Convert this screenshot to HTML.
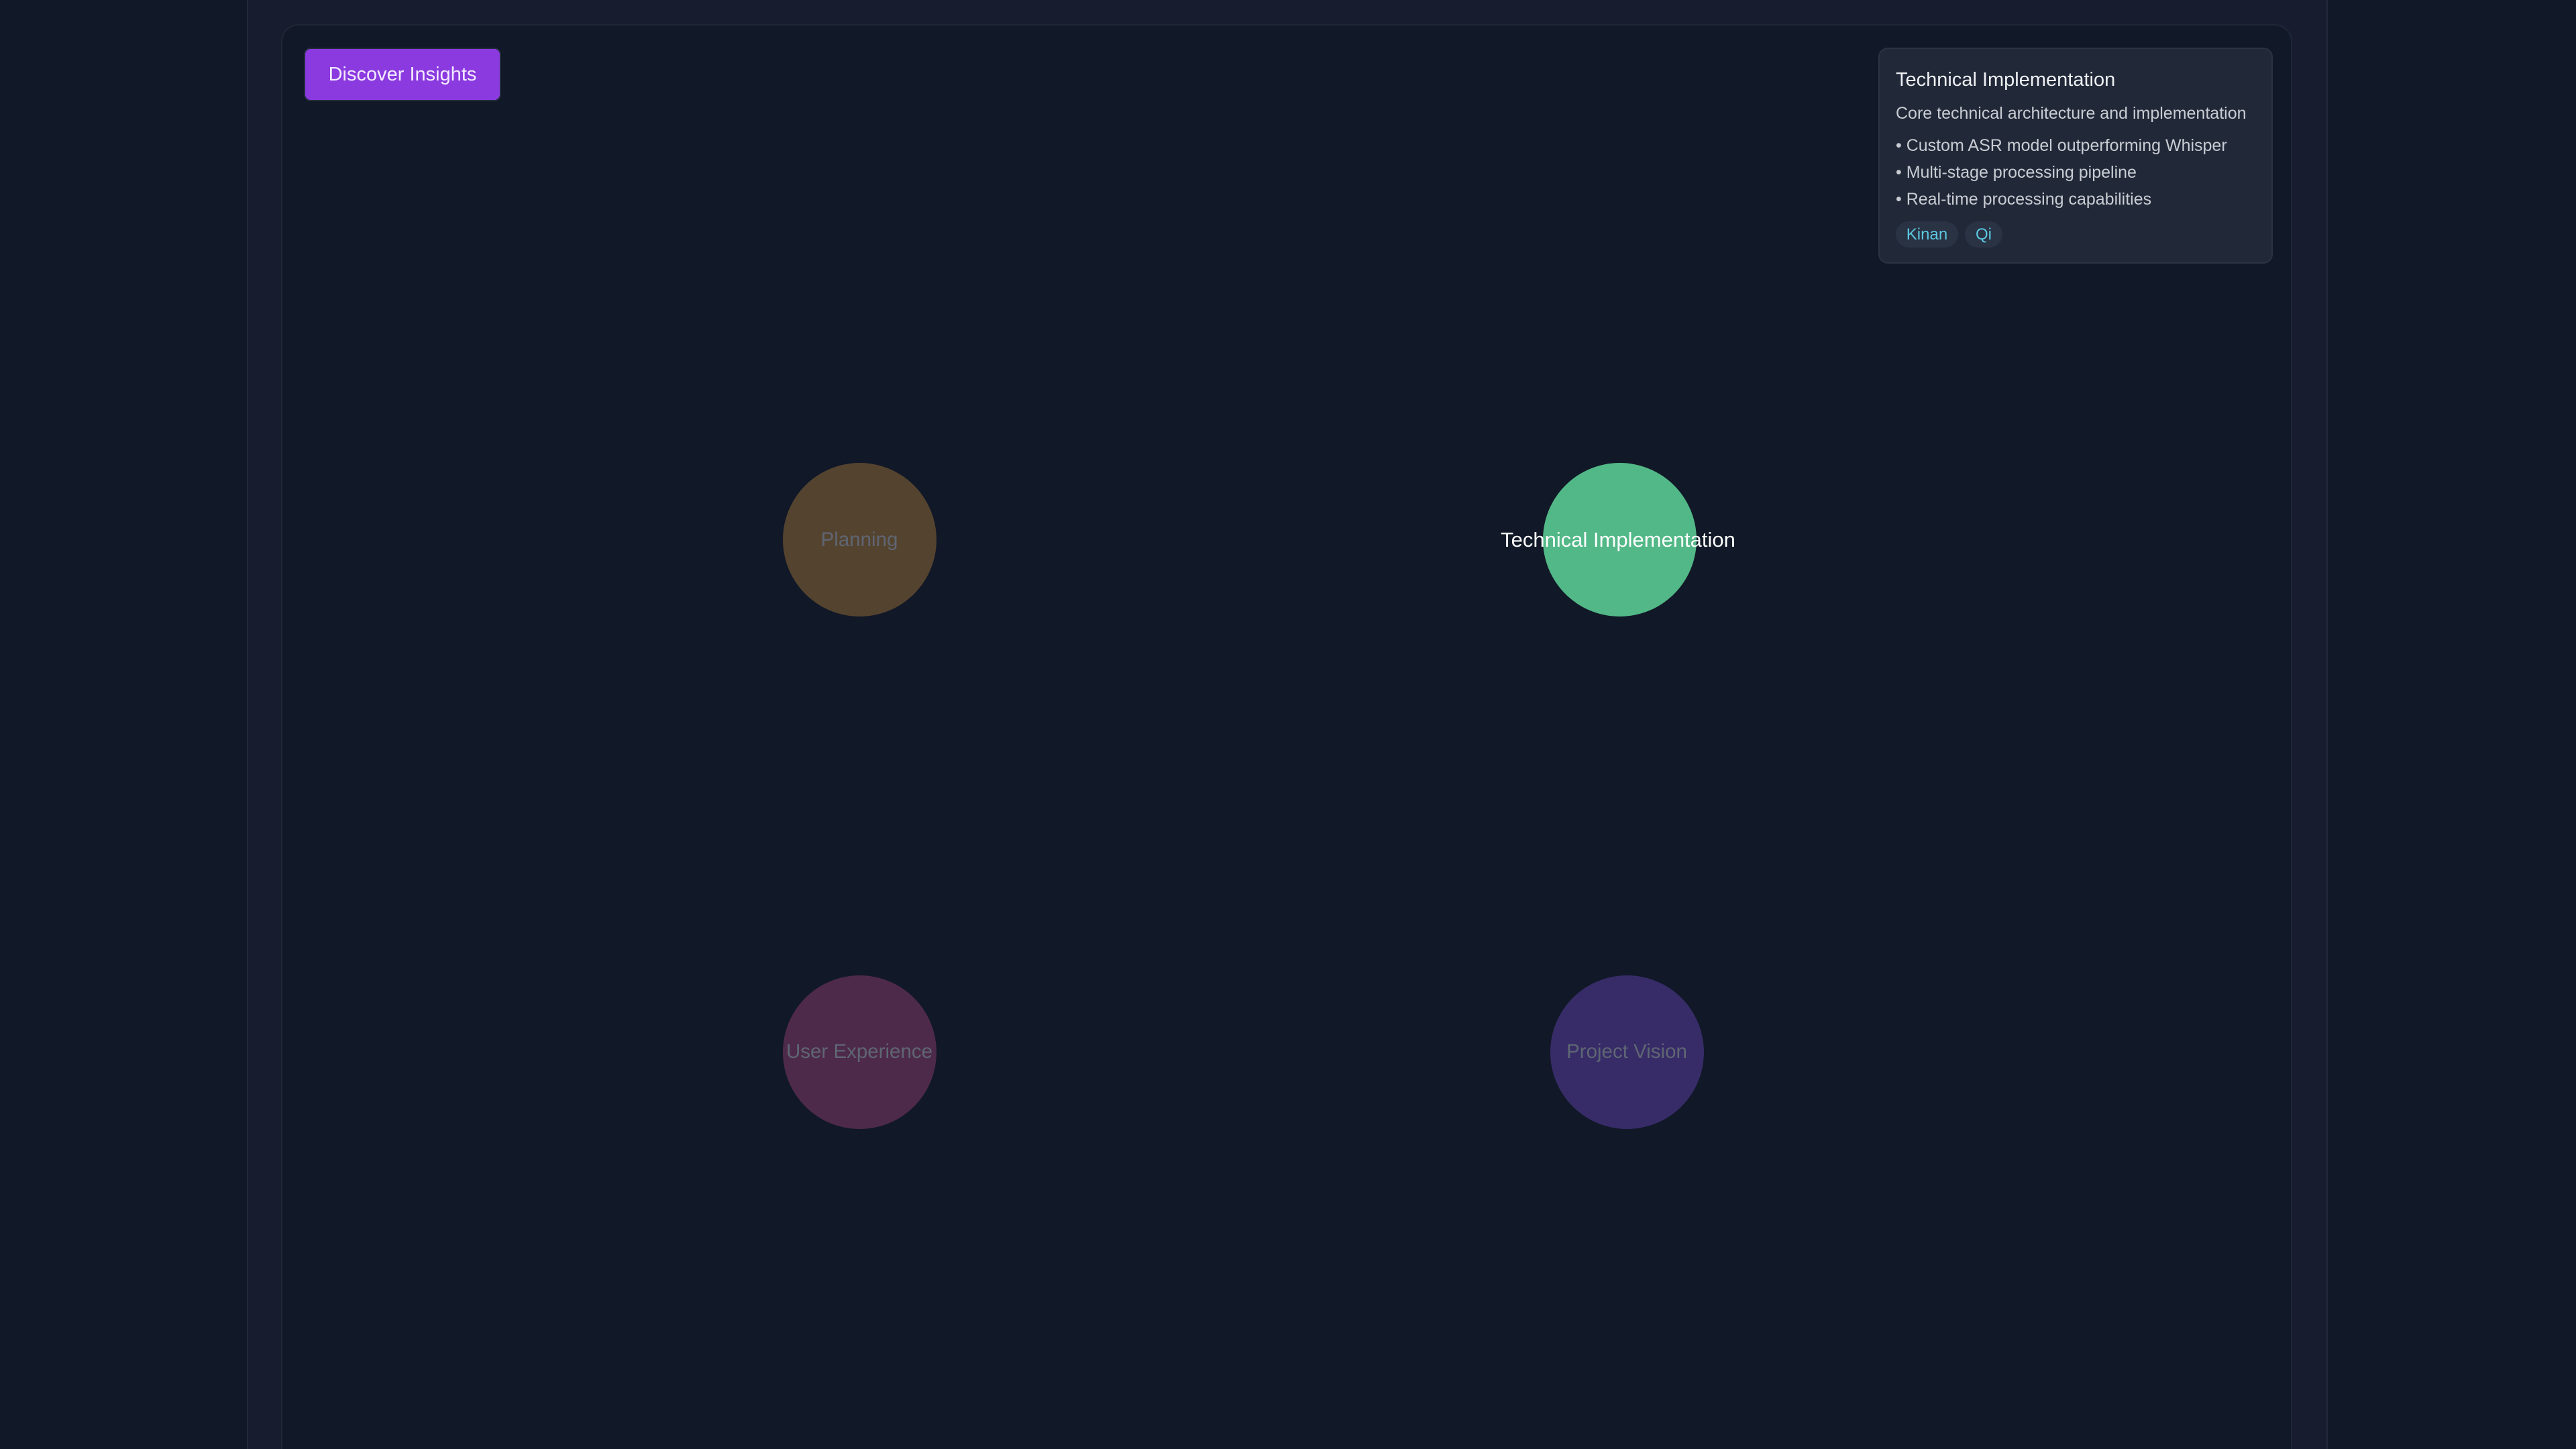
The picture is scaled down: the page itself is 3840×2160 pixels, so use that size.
<!DOCTYPE html>
<html><head><meta charset="utf-8"><style>
html,body{margin:0;padding:0;width:3840px;height:2160px;overflow:hidden}
body{background:#111827;position:relative;font-family:"Liberation Sans",sans-serif}
.panel{position:absolute;left:368px;top:0;width:3102px;height:2160px;background:#171d2e;border-left:2px solid #222a3a;border-right:2px solid #222a3a;box-sizing:border-box}
.canvas{position:absolute;left:419px;top:36px;width:2998px;height:2124px;background:#111827;border:2px solid #1f2737;border-bottom:none;border-radius:26px 26px 0 0;box-sizing:border-box}
.btn{position:absolute;left:453px;top:71px;width:290px;height:76px;background:#8a3adf;border:2px solid #252c3c;border-radius:10px;color:#f3eaff;font-size:29px;line-height:76px;text-align:center}
.tip{position:absolute;left:2800px;top:71px;width:588px;height:322px;background:#212838;border:2px solid #2b3343;border-radius:14px;box-sizing:border-box;color:#d1d5db}
.tip .t{position:absolute;left:24px;top:28px;font-size:29px;line-height:36px;color:#eef0f3;white-space:nowrap}
.tip .l{position:absolute;left:24px;font-size:25px;line-height:30px;color:#c9cdd3;white-space:nowrap}
.tag{position:absolute;top:257px;height:39px;line-height:39px;border-radius:20px;background:#2a3344;color:#5bc8e0;font-size:24px;text-align:center}
.c{position:absolute;width:229px;height:229px;border-radius:50%}
.lab{position:absolute;font-size:29.5px;white-space:nowrap;transform:translate(-50%,-50%);color:#5f6673}
</style></head><body>
<div class="panel"></div>
<div class="canvas"></div>
<div class="btn">Discover Insights</div>
<div class="tip">
<div class="t">Technical Implementation</div>
<div class="l" style="top:81px">Core technical architecture and implementation</div>
<div class="l" style="top:129px">• Custom ASR model outperforming Whisper</div>
<div class="l" style="top:169px">• Multi-stage processing pipeline</div>
<div class="l" style="top:209px">• Real-time processing capabilities</div>
<div class="tag" style="left:24px;width:93px">Kinan</div>
<div class="tag" style="left:127px;width:56px">Qi</div>
</div>
<div class="c" style="left:1167px;top:690px;background:#54432f"></div>
<div class="lab" style="left:1281px;top:805px">Planning</div>
<div class="c" style="left:2300px;top:690px;background:#52b887"></div>
<div class="lab" style="left:2412px;top:805px;color:#fff;font-size:31px">Technical Implementation</div>
<div class="c" style="left:1167px;top:1454px;background:#4e2a4a"></div>
<div class="lab" style="left:1281px;top:1568px">User Experience</div>
<div class="c" style="left:2311px;top:1454px;background:#372c68"></div>
<div class="lab" style="left:2425px;top:1568px">Project Vision</div>
</body></html>
